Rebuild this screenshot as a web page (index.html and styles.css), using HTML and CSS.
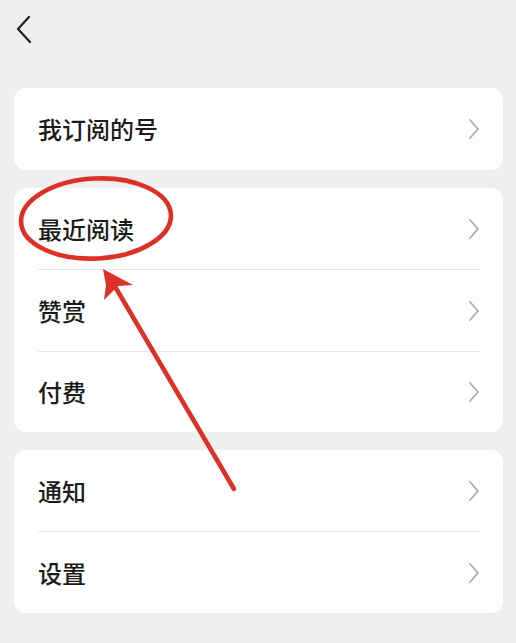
FILE: index.html
```html
<!DOCTYPE html>
<html lang="zh-CN">
<head>
<meta charset="utf-8">
<link rel="stylesheet" href="styles.css">
</head>
<body>
<div class="page">
  <header class="topbar">
    <svg class="back" width="20" height="30" viewBox="0 0 20 30"><polyline points="12,2 1,14 13,27" fill="none" stroke="#222" stroke-width="2.2" stroke-linecap="round" stroke-linejoin="round"/></svg>
  </header>
  <main class="content">
    <section class="card">
      <div class="row row-tall"><span class="label">我订阅的号</span><svg class="chev" width="12" height="20" viewBox="0 0 12 20"><polyline points="2,1 10,10 2,19" fill="none" stroke="#ababab" stroke-width="1.8" stroke-linecap="round" stroke-linejoin="round"/></svg></div>
    </section>
    <section class="card">
      <div class="row"><span class="label">最近阅读</span><svg class="chev" width="12" height="20" viewBox="0 0 12 20"><polyline points="2,1 10,10 2,19" fill="none" stroke="#ababab" stroke-width="1.8" stroke-linecap="round" stroke-linejoin="round"/></svg></div>
      <div class="sep"></div>
      <div class="row"><span class="label">赞赏</span><svg class="chev" width="12" height="20" viewBox="0 0 12 20"><polyline points="2,1 10,10 2,19" fill="none" stroke="#ababab" stroke-width="1.8" stroke-linecap="round" stroke-linejoin="round"/></svg></div>
      <div class="sep"></div>
      <div class="row row-short"><span class="label">付费</span><svg class="chev" width="12" height="20" viewBox="0 0 12 20"><polyline points="2,1 10,10 2,19" fill="none" stroke="#ababab" stroke-width="1.8" stroke-linecap="round" stroke-linejoin="round"/></svg></div>
    </section>
    <section class="card">
      <div class="row"><span class="label">通知</span><svg class="chev" width="12" height="20" viewBox="0 0 12 20"><polyline points="2,1 10,10 2,19" fill="none" stroke="#ababab" stroke-width="1.8" stroke-linecap="round" stroke-linejoin="round"/></svg></div>
      <div class="sep"></div>
      <div class="row"><span class="label">设置</span><svg class="chev" width="12" height="20" viewBox="0 0 12 20"><polyline points="2,1 10,10 2,19" fill="none" stroke="#ababab" stroke-width="1.8" stroke-linecap="round" stroke-linejoin="round"/></svg></div>
    </section>
  </main>
  <svg class="annot" width="516" height="643" viewBox="0 0 516 643">
    <ellipse cx="96" cy="218.5" rx="75" ry="40" fill="none" stroke="#dd3128" stroke-width="4.6" transform="rotate(-3 96 218.5)"/>
    <line x1="234" y1="489" x2="110" y2="278" stroke="#dd3128" stroke-width="4.5" stroke-linecap="round"/>
    <polygon points="103,269 133,285 118,286 104,300 106,285" fill="#dd3128"/>
  </svg>
</div>
</body>
</html>
```
FILE: styles.css
```css
html, body {
  margin: 0;
  padding: 0;
  background: #efefef;
}
.page {
  position: relative;
  width: 516px;
  height: 643px;
  overflow: hidden;
  font-family: "Noto Sans CJK SC", "Noto Sans", sans-serif;
  color: #1b1b1b;
}
.topbar {
  height: 60px;
  box-sizing: border-box;
  border-bottom: 1px solid #e9e9e9;
  display: flex;
  align-items: flex-start;
  padding: 15px 0 0 17px;
}
.back {
  display: block;
}
.content {
  padding: 28px 13px 0 14px;
  display: flex;
  flex-direction: column;
  gap: 18px;
}
.card {
  background: #fff;
  border-radius: 12px;
  overflow: hidden;
}
.row {
  height: 81px;
  display: flex;
  align-items: center;
  justify-content: space-between;
  padding: 0 23px 0 24px;
}
.row-tall {
  height: 82px;
}
.row-short {
  height: 80px;
}
.label {
  font-size: 24px;
  line-height: 1;
  font-weight: 500;
}
.chev {
  display: block;
}
.sep {
  height: 1px;
  background: #e6e6e6;
  margin: 0 23px 0 24px;
}
.annot {
  position: absolute;
  left: 0;
  top: 0;
  pointer-events: none;
}
```
